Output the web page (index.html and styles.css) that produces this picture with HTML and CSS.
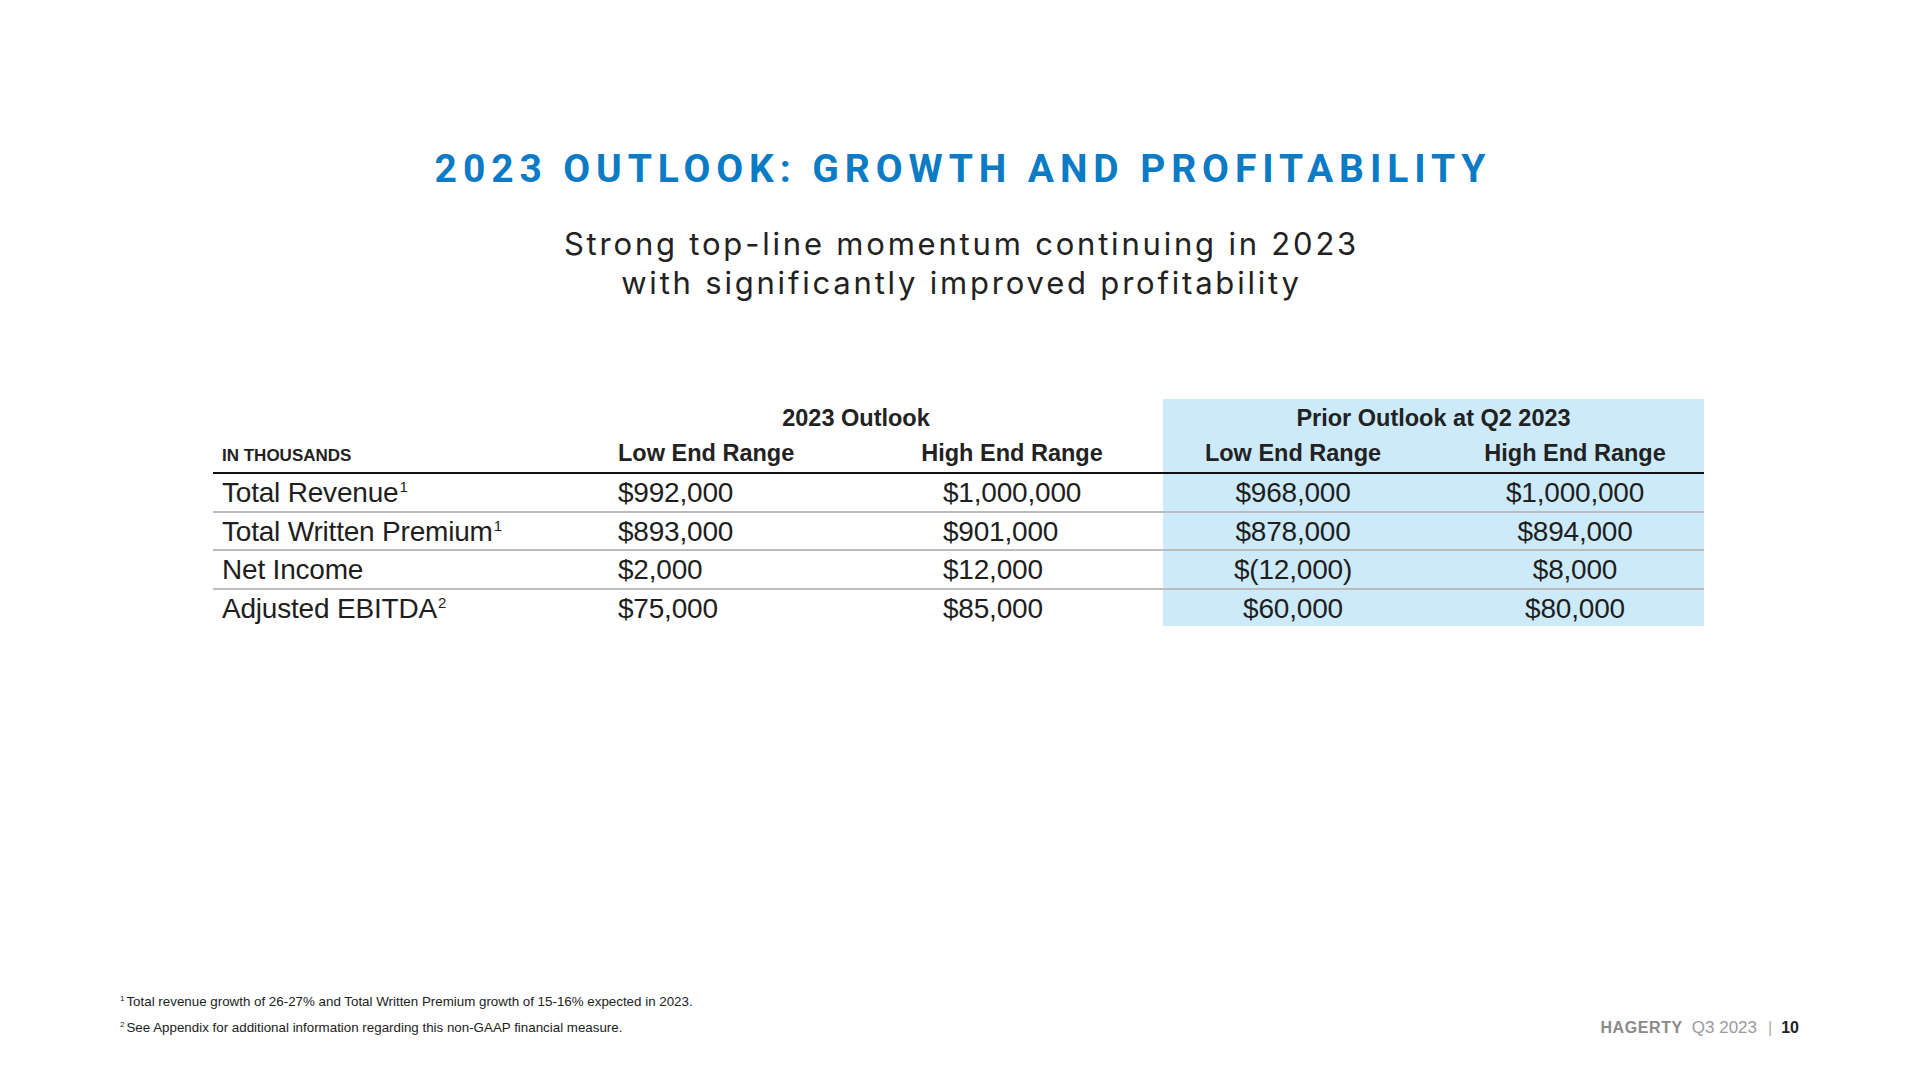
FILE: index.html
```html
<!DOCTYPE html>
<html lang="en">
<head>
<meta charset="utf-8">
<title>2023 Outlook</title>
<link rel="stylesheet" href="styles.css">
</head>
<body>
<div class="slide">
  <h1 class="title">2023 OUTLOOK: GROWTH AND PROFITABILITY</h1>
  <p class="subtitle">Strong top-line momentum continuing in 2023<br>with significantly improved profitability</p>

  <div class="table-wrap">
    <table class="outlook">
      <colgroup>
        <col class="w-label">
        <col class="w-low">
        <col class="w-high">
        <col class="w-plow">
        <col class="w-phigh">
      </colgroup>
      <thead>
        <tr class="group-row">
          <th></th>
          <th colspan="2" class="group">2023 Outlook</th>
          <th colspan="2" class="group prior">Prior Outlook at Q2 2023</th>
        </tr>
        <tr class="head-row">
          <th class="label units">IN THOUSANDS</th>
          <th class="low">Low End Range</th>
          <th class="high-h">High End Range</th>
          <th class="plow prior">Low End Range</th>
          <th class="phigh prior">High End Range</th>
        </tr>
      </thead>
      <tbody>
        <tr>
          <td class="label">Total Revenue<sup>1</sup></td>
          <td class="low">$992,000</td>
          <td class="high">$1,000,000</td>
          <td class="plow prior">$968,000</td>
          <td class="phigh prior">$1,000,000</td>
        </tr>
        <tr>
          <td class="label">Total Written Premium<sup>1</sup></td>
          <td class="low">$893,000</td>
          <td class="high">$901,000</td>
          <td class="plow prior">$878,000</td>
          <td class="phigh prior">$894,000</td>
        </tr>
        <tr>
          <td class="label">Net Income</td>
          <td class="low">$2,000</td>
          <td class="high">$12,000</td>
          <td class="plow prior">$(12,000)</td>
          <td class="phigh prior">$8,000</td>
        </tr>
        <tr>
          <td class="label">Adjusted EBITDA<sup>2</sup></td>
          <td class="low">$75,000</td>
          <td class="high">$85,000</td>
          <td class="plow prior">$60,000</td>
          <td class="phigh prior">$80,000</td>
        </tr>
      </tbody>
    </table>
  </div>

  <footer class="footer">
    <div class="notes">
      <p class="note"><sup>1</sup>Total revenue growth of 26-27% and Total Written Premium growth of 15-16% expected in 2023.</p>
      <p class="note"><sup>2</sup>See Appendix for additional information regarding this non-GAAP financial measure.</p>
    </div>
    <div class="pager">
      <span class="brand">HAGERTY</span>
      <span class="quarter">Q3 2023</span>
      <span class="sep">|</span>
      <span class="page">10</span>
    </div>
  </footer>
</div>
</body>
</html>
```

FILE: styles.css
```css
* { box-sizing: border-box; }

html, body {
  margin: 0;
  padding: 0;
  background: #ffffff;
}

.slide {
  width: 1920px;
  height: 1080px;
  display: flex;
  flex-direction: column;
  background: #ffffff;
  font-family: "Liberation Sans", Arial, sans-serif;
  color: #222222;
  overflow: hidden;
}

.title {
  margin: 147px 0 0 0;
  padding-left: 6px;
  text-align: center;
  font-family: Roboto, "Liberation Sans", sans-serif;
  font-weight: 700;
  font-size: 39px;
  line-height: 44px;
  letter-spacing: 5.9px;
  color: #0a7bc4;
}

.subtitle {
  margin: 33px 0 0 0;
  padding-left: 3px;
  text-align: center;
  font-family: Inter, "Liberation Sans", sans-serif;
  font-weight: 400;
  font-size: 31px;
  line-height: 39px;
  letter-spacing: 2.8px;
  color: #222222;
}

.table-wrap {
  margin-top: 97px;
  padding-left: 213px;
}

.outlook {
  width: 1491px;
  table-layout: fixed;
  border-collapse: collapse;
  border-spacing: 0;
}

.w-label { width: 395px; }
.w-low { width: 253px; }
.w-high { width: 302px; }
.w-plow { width: 260px; }
.w-phigh { width: 281px; }

.outlook th,
.outlook td {
  padding: 0;
  white-space: nowrap;
}

.outlook th {
  font-weight: 700;
  font-size: 23.5px;
  color: #222222;
}

.group-row th {
  height: 38px;
  line-height: 38px;
  text-align: center;
}

.group-row .group:not(.prior) {
  padding-right: 59px;
}

.head-row th {
  height: 33px;
  line-height: 33px;
  border-bottom: 2px solid #111111;
  vertical-align: baseline;
}

.prior {
  background: #cdeafa;
}

.label {
  text-align: left;
  padding-left: 9px !important;
}

.units {
  font-size: 17px !important;
  letter-spacing: 0;
}

.low {
  text-align: left;
  padding-left: 10px !important;
}

.high-h {
  text-align: center;
}

.high {
  text-align: left;
  padding-left: 82px !important;
}

.plow {
  text-align: center;
}

.phigh {
  text-align: center;
  padding-left: 23px !important;
}

.outlook td {
  font-size: 28px;
  height: 36.5px;
  line-height: 35.5px;
  padding-top: 1px;
  color: #1e1e1e;
  letter-spacing: -0.2px;
}

.outlook tbody tr:not(:last-child) td {
  border-bottom: 2px solid #bcbcbc;
}

.outlook td sup {
  font-size: 15px;
  line-height: 0;
  vertical-align: 10px;
  margin-left: 1px;
}

.footer {
  margin-top: auto;
  display: flex;
  justify-content: space-between;
  align-items: flex-end;
  padding: 0 121px 40px 120px;
}

.note {
  margin: 0;
  font-size: 13.35px;
  line-height: 25.5px;
  color: #222222;
}

.note sup {
  font-size: 8px;
  line-height: 0;
  vertical-align: 5px;
  margin-right: 2px;
}

.pager {
  display: flex;
  align-items: baseline;
  font-size: 16px;
  line-height: 25.5px;
}

.brand {
  font-weight: 700;
  color: #8a8a8a;
  letter-spacing: 0.6px;
}

.quarter {
  margin-left: 9px;
  color: #9a9a9a;
  font-size: 17px;
}

.sep {
  margin-left: 11px;
  color: #aaaaaa;
}

.page {
  margin-left: 9px;
  font-weight: 700;
  color: #222222;
}
```
